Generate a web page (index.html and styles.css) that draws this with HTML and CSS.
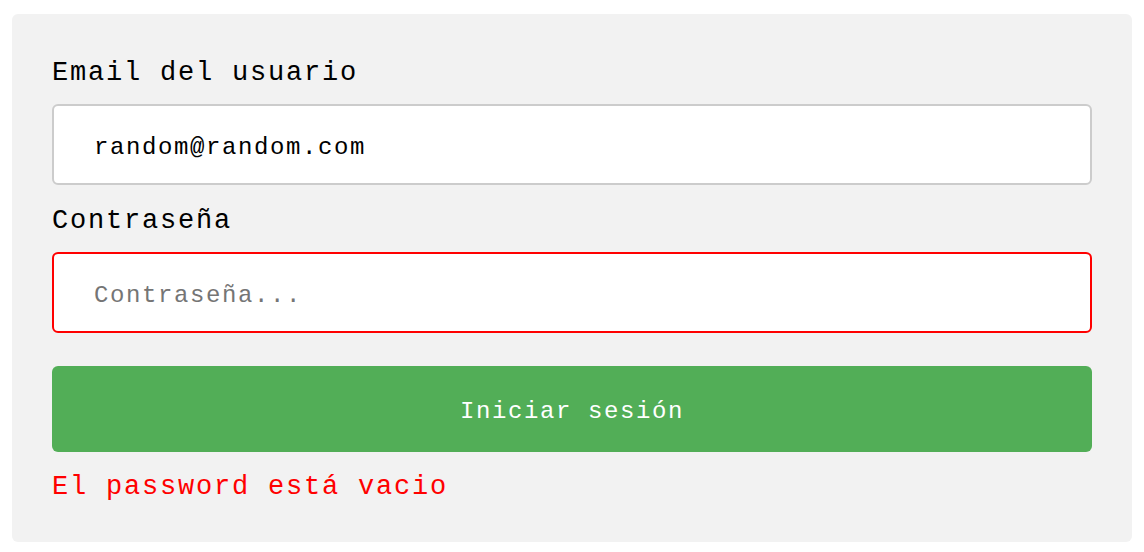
FILE: index.html
```html
<!DOCTYPE html>
<html lang="es">
<head>
<meta charset="utf-8">
<title>Login</title>
<link rel="stylesheet" href="styles.css">
</head>
<body>
<form class="card">
  <label class="label" for="email">Email del usuario</label>
  <input class="field" id="email" type="text" value="random@random.com">
  <label class="label" for="pass">Contraseña</label>
  <input class="field field-error" id="pass" type="password" placeholder="Contraseña...">
  <button class="submit" type="button">Iniciar sesión</button>
  <p class="error">El password está vacio</p>
</form>
</body>
</html>
```
FILE: styles.css
```css
html, body {
  margin: 0;
  background: #ffffff;
}
body {
  padding: 14px 12px 10px 12px;
  font-family: "Liberation Mono", "Courier New", monospace;
}
.card {
  box-sizing: border-box;
  width: 1120px;
  height: 528px;
  background: #f2f2f2;
  border-radius: 6px;
  padding: 40px;
  display: flex;
  flex-direction: column;
  overflow: hidden;
}
.label {
  display: block;
  font-size: 27px;
  letter-spacing: 1.8px;
  line-height: 38px;
  color: #000;
  margin-bottom: 12px;
}
.field {
  box-sizing: border-box;
  width: 100%;
  height: 81px;
  flex: none;
  border: 2px solid #cccccc;
  border-radius: 6px;
  background: #fff;
  padding: 6px 40px 0 40px;
  font-family: "Liberation Mono", "Courier New", monospace;
  font-size: 24px;
  letter-spacing: 1.6px;
  color: #000;
  margin: 0 0 17px 0;
  outline: none;
}
.field::placeholder {
  color: #757575;
}
.field-error {
  border-color: #ff0000;
}
.submit {
  box-sizing: border-box;
  flex: none;
  margin-top: 16px;
  height: 86px;
  width: 100%;
  border: none;
  border-radius: 6px;
  background: #52ae57;
  color: #fff;
  padding: 5px 0 0 0;
  font-family: "Liberation Mono", "Courier New", monospace;
  font-size: 24px;
  letter-spacing: 1.6px;
}
.error {
  margin: 16px 0 0 0;
  font-size: 27px;
  letter-spacing: 1.8px;
  line-height: 38px;
  color: #ff0000;
}
```
